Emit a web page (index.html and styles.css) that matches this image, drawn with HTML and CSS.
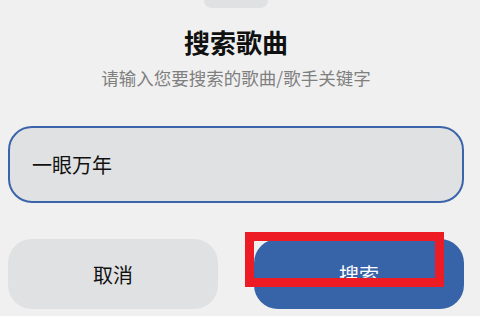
FILE: index.html
```html
<!DOCTYPE html>
<html lang="zh-CN">
<head>
    <meta charset="UTF-8">
    <meta name="viewport" content="width=device-width, initial-scale=1.0">
    <title>搜索歌曲</title>
    <link rel="stylesheet" href="styles.css">
</head>
<body>
    <div class="sheet">
        <div class="handle"></div>
        <h1 class="title">搜索歌曲</h1>
        <p class="subtitle">请输入您要搜索的歌曲/歌手关键字</p>

        <div class="search-box">一眼万年</div>

        <div class="actions">
            <button class="btn btn-cancel">取消</button>
            <div class="btn-wrap">
                <button class="btn btn-search">搜索</button>
                <div class="highlight"></div>
            </div>
        </div>
    </div>
</body>
</html>
```

FILE: styles.css
```css
:root {
    --bg: #f0f0f0;
    --gray: #e0e1e3;
    --blue: #3763a8;
    --border-blue: #3b64ab;
    --red: #ed1c24;
    --muted: #7f7f7f;
}

body {
    margin: 0;
    background: var(--bg);
    font-family: "Noto Sans CJK SC", "Noto Sans", sans-serif;
    color: #111;
}

.sheet {
    width: 456px;
    padding: 0 8px;
    height: 316px;
    overflow: hidden;
}

.handle {
    width: 64px;
    height: 8px;
    margin: 0 auto;
    background: var(--gray);
    border-radius: 0 0 8px 8px;
}

.title {
    margin: 16px 0 0;
    font-size: 26px;
    line-height: 36px;
    font-weight: 700;
    text-align: center;
}

.subtitle {
    margin: 6px 0 0;
    font-size: 17.5px;
    line-height: 24px;
    color: var(--muted);
    text-align: center;
}

.search-box {
    margin-top: 36px;
    height: 77px;
    box-sizing: border-box;
    padding: 0 22px;
    display: flex;
    align-items: center;
    background: var(--gray);
    border: 2px solid var(--border-blue);
    border-radius: 24px;
    font-size: 20px;
}

.actions {
    margin-top: 36px;
    display: grid;
    grid-template-columns: 210px 210px;
    gap: 36px;
}

.btn {
    width: 100%;
    height: 70px;
    border: none;
    border-radius: 24px;
    font-family: inherit;
    font-size: 20px;
    padding: 0;
}

.btn-cancel {
    background: var(--gray);
    color: #111;
}

.btn-wrap {
    position: relative;
}

.btn-search {
    background: var(--blue);
    color: #fff;
}

.highlight {
    position: absolute;
    left: -9px;
    top: -7px;
    width: 199px;
    height: 55px;
    box-sizing: border-box;
    border: 9px solid var(--red);
}
```
